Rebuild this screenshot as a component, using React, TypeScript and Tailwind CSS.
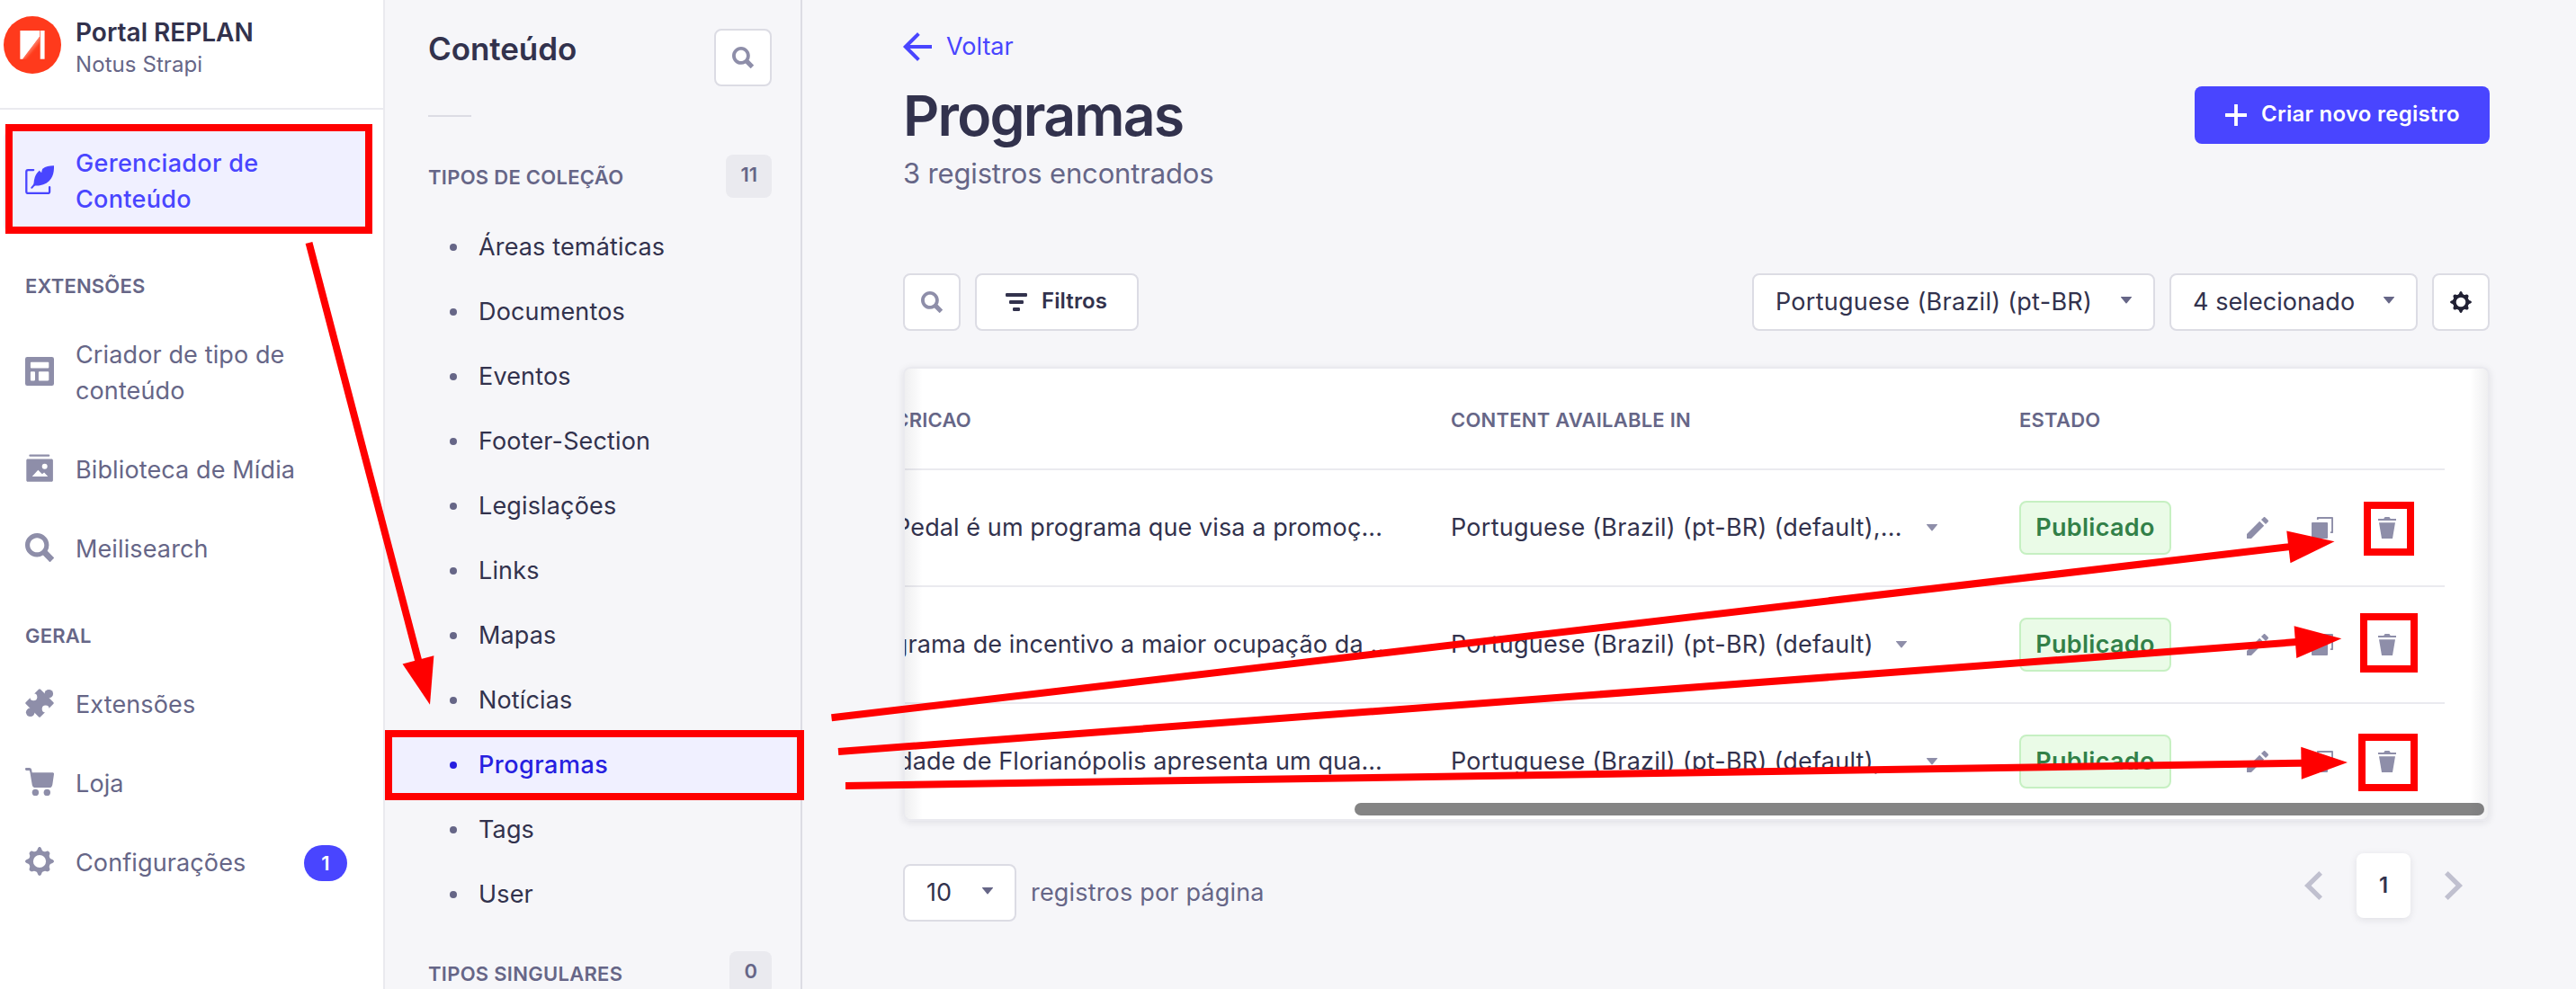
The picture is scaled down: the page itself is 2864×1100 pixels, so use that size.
import React from "react";
import type { ReactNode } from "react";

/* ---------- icons ---------- */

const SearchIcon = ({ className }: { className: string }) => (
  <svg viewBox="0 0 24 24" fill="currentColor" className={className}>
    <path
      fillRule="evenodd"
      d="m23.813 20.163-5.3-5.367a9.792 9.792 0 0 0 1.312-4.867C19.825 4.455 15.375 0 9.913 0 4.45 0 0 4.455 0 9.929c0 5.473 4.45 9.928 9.912 9.928a9.757 9.757 0 0 0 5.007-1.4l5.275 5.35a.634.634 0 0 0 .913 0l2.706-2.737a.641.641 0 0 0 0-.907ZM9.91 3.867c3.338 0 6.05 2.718 6.05 6.061s-2.712 6.061-6.05 6.061c-3.337 0-6.05-2.718-6.05-6.06 0-3.344 2.713-6.062 6.05-6.062Z"
    />
  </svg>
);

const FeatherIcon = () => (
  <svg viewBox="0 0 32 32" className="size-8">
    <path
      d="M9.2 5.1H3.1a1.8 1.8 0 0 0-1.8 1.8v22.3a1.8 1.8 0 0 0 1.8 1.8h22.2a1.8 1.8 0 0 0 1.8-1.8v-5"
      fill="none"
      stroke="currentColor"
      strokeWidth="2.3"
      strokeLinecap="round"
    />
    <path
      d="M32 .3c.2 5.500-.6 10.600-3.300 14.500-2.600 4.200-7 6.800-12.500 7.500-1.700.3-3.600.2-5 .3-1.200.6-2.200 2-3.200 3-.8.700-2.300-.4-1.500-1.400 1.100-1.300 2.500-2.500 3-4.200.1-2.500.6-4.700 1.300-7 .9-2.800 2.700-5.600 5.200-7.600.5 1 1.200 2 2.200 2.600.1-1.600.5-3.200 1.100-4.300C22.900 1.200 27.400.2 32 .3Z"
      fill="currentColor"
    />
  </svg>
);

const LayoutIcon = () => (
  <svg viewBox="0 0 32 32" className="size-8">
    <path
      fillRule="evenodd"
      fill="currentColor"
      d="M2.300 0h27.400A2.300 2.300 0 0 1 32 2.300v27.400a2.300 2.300 0 0 1-2.300 2.300H2.300A2.300 2.300 0 0 1 0 29.700V2.300A2.300 2.300 0 0 1 2.300 0ZM6.800 5.700a.9.900 0 0 0-.9.900v5a.9.900 0 0 0 .9.900h18.600a.9.900 0 0 0 .9-.9v-5a.9.900 0 0 0-.9-.9H6.800Zm0 10.600a.9.900 0 0 0-.9.900v8.400c0 .5.400.9.900.9h3.300c.5 0 .9-.4.900-.9v-8.400a.9.900 0 0 0-.9-.9H6.800Zm9 0a.9.900 0 0 0-.9.900v8.400c0 .5.400.9.900.9h9.600c.5 0 .9-.4.900-.9v-8.400a.9.900 0 0 0-.9-.9h-9.600Z"
    />
  </svg>
);

const MediaIcon = () => (
  <svg viewBox="0 0 32 32" className="size-8">
    <rect x="4.300" y="0.600" width="23" height="2.200" rx="1.100" fill="currentColor" />
    <path
      fillRule="evenodd"
      fill="currentColor"
      d="M2.800 5.600h26.600c.8 0 1.500.7 1.500 1.500v22.200c0 .8-.7 1.500-1.500 1.500H2.800c-.8 0-1.500-.7-1.500-1.500V7.100c0-.8.700-1.500 1.500-1.500Zm18.900 5.100a3 3 0 1 0 0 6 3 3 0 0 0 0-6ZM7.700 24.900h17.600l-4.200-4.400-2.200 1.800-4.600-4.500-6.600 7.100Z"
    />
  </svg>
);

const PuzzleIcon = () => (
  <svg viewBox="0 0 32 32" className="size-8">
    <mask id="puzzle">
      <rect width="32" height="32" fill="#fff" />
      <circle cx="9.300" cy="9.200" r="4" fill="#000" />
      <circle cx="22.700" cy="22.600" r="4" fill="#000" />
      <path d="m3 3 6 .5 1.500 4.500-2 1.500-4.500-1.500ZM29 29l-6-.5-1.500-4.500 2-1.500 4.500 1.500Z" fill="#000" />
    </mask>
    <g mask="url(#puzzle)" fill="currentColor">
      <path
        d="M16 1.800 30.200 16 16 30.200 1.800 16Z"
        stroke="currentColor"
        strokeWidth="3"
        strokeLinejoin="round"
      />
      <circle cx="26.300" cy="5.700" r="4.800" />
      <circle cx="5.700" cy="26.300" r="4.800" />
    </g>
  </svg>
);

const CartIcon = () => (
  <svg viewBox="0 0 32 32" className="size-8" fill="currentColor">
    <path d="M0 1.500C0 .6.600.1 1.300.1h3.300c1.200 0 2.200.7 2.500 1.900l.6 3.200h22.800c.9 0 1.600.8 1.500 1.700l-1.700 11.800c-.3 2-1.400 3.400-3.500 3.400H11.500c-2.100 0-3.500-1.300-3.800-3.400L5.400 5 4.800 2.900H1.300C.6 2.900 0 2.300 0 1.500Z" />
    <circle cx="11.400" cy="27.400" r="3.700" />
    <circle cx="24.300" cy="27.400" r="3.700" />
  </svg>
);

const CogIcon = ({ className, hole }: { className: string; hole: string }) => (
  <svg viewBox="0 0 32 32" className={className} fill="currentColor">
    {[0, 90, 180, 270].map((a) => (
      <path
        key={a}
        transform={`rotate(${a} 16 16)`}
        d="M11 5.500c2.100-.5 2.300-2.200 3-3.800C14.500.6 15.200 0 16 0s1.500.6 2 1.700c.7 1.600.9 3.300 3 3.800Z"
      />
    ))}
    {[45, 135, 225, 315].map((a) => (
      <path
        key={a}
        transform={`rotate(${a} 16 16)`}
        d="M11 6c1.600-.8 1.900-2.300 2.600-3.600.6-1 1.400-1.400 2.400-1.400s1.800.4 2.400 1.400c.7 1.300 1 2.800 2.600 3.600Z"
      />
    ))}
    <circle cx="16" cy="16" r="12" />
    <circle cx="16" cy="16" r="7.100" fill={hole} />
  </svg>
);

const Caret = ({ className }: { className: string }) => (
  <svg viewBox="0 0 12 8" className={className} fill="currentColor">
    <path d="M.4 0h11.200c.4 0 .5.400.3.700L6.500 7.200a.7.700 0 0 1-1 0L.1.700C-.1.400 0 0 .4 0Z" />
  </svg>
);

const PencilIcon = () => (
  <svg viewBox="0 0 24 24" className="size-6" fill="currentColor">
    <path d="m23.604 3.514c.528.528.528 1.360 0 1.887l-2.622 2.607-4.990-4.990L18.600.396a1.322 1.322 0 0 1 1.887 0l3.118 3.118ZM0 24v-4.990l14.200-14.200 4.990 4.990L4.990 24H0Z" />
  </svg>
);

const DuplicateIcon = () => (
  <svg viewBox="0 0 24 24" className="size-6" fill="currentColor">
    <path d="M6.800 0h16.300c.5 0 .9.400.9.900v16.300c0 .5-.4.900-.9.900h-2.200v-1.900h1.200V1.900H7.700v1.200H5.900V.9c0-.5.400-.9.900-.9Z" />
    <rect y="6" width="18" height="18" rx="0.900" />
  </svg>
);

const TrashIcon = () => (
  <svg viewBox="0 0 24 24" className="size-6" fill="currentColor">
    <path d="M3.236 6.149a.2.200 0 0 0-.197.233L6 24h12l2.960-17.618a.2.200 0 0 0-.196-.233H3.236ZM21.800 1.983c.11 0 .2.090.2.200v1.584a.2.200 0 0 1-.2.200H2.200a.2.200 0 0 1-.2-.2V2.183c0-.11.090-.2.200-.2h5.511c.9 0 1.631-1.090 1.631-1.983h5.316c0 .894.730 1.983 1.631 1.983H21.800Z" />
  </svg>
);

const FilterIcon = () => (
  <svg viewBox="0 0 24 24" className="size-6" fill="currentColor">
    <rect y="2" width="24" height="4" rx="1.200" />
    <rect x="4" y="10" width="16" height="4" rx="1.200" />
    <rect x="8" y="18" width="8" height="4" rx="1.200" />
  </svg>
);

const BackIcon = () => (
  <svg viewBox="0 0 24 24" className="size-8" fill="currentColor">
    <path d="M24 13.300a.2.200 0 0 1-.2.200H5.740l8.239 8.239a.2.200 0 0 1 0 .282L12.140 23.860a.2.200 0 0 1-.282 0L.14 12.140a.2.200 0 0 1 0-.282L11.860.14a.2.200 0 0 1 .282 0L13.980 1.980a.2.200 0 0 1 0 .282L5.740 10.500H23.800c.11 0 .2.090.2.200v2.600Z" />
  </svg>
);

const PlusIcon = () => (
  <svg viewBox="0 0 24 24" className="size-6" fill="currentColor">
    <path d="M24 13.604a.3.300 0 0 1-.3.300h-9.795V23.700a.3.300 0 0 1-.3.300h-3.210a.3.300 0 0 1-.3-.3v-9.795H.3a.3.300 0 0 1-.3-.3v-3.210a.3.300 0 0 1 .3-.3h9.795V.3a.3.300 0 0 1 .3-.3h3.210a.3.300 0 0 1 .3.300v9.795H23.700a.3.300 0 0 1 .3.300v3.210Z" />
  </svg>
);

const Chevron = ({ className }: { className: string }) => (
  <svg viewBox="0 0 20 32" className={className} fill="currentColor">
    <path d="M16.300 0 20 3.700 7.600 16 20 28.300 16.300 32 0 16Z" />
  </svg>
);

const Logo = () => (
  <svg viewBox="0 0 64 64" className="size-16 shrink-0">
    <defs>
      <linearGradient id="fold" gradientUnits="userSpaceOnUse" x1="29" y1="30" x2="36" y2="36">
        <stop offset="0" stopColor="#ffb5a8" />
        <stop offset="1" stopColor="#ff3f1e" />
      </linearGradient>
    </defs>
    <circle cx="32" cy="32" r="32" fill="#ff3a1c" />
    <path d="M18.400 16H40.300v6.500L21.500 47.700h-3.100Z" fill="#fff" />
    <path d="M40.300 22.500v10L27.500 47.700h-6.500Z" fill="url(#fold)" />
    <path d="M41 16h4.600v31.700H41Z" fill="#fff" />
    <path d="M40.300 16h.8v31.700h-.8Z" fill="#ff8d78" />
  </svg>
);

/* ---------- left navigation ---------- */

type NavItem = { icon: ReactNode; label: string; badge?: string };

const extensions: NavItem[] = [
  { icon: <LayoutIcon />, label: "Criador de tipo de conteúdo" },
  { icon: <MediaIcon />, label: "Biblioteca de Mídia" },
  { icon: <SearchIcon className="size-8" />, label: "Meilisearch" },
];

const general: NavItem[] = [
  { icon: <PuzzleIcon />, label: "Extensões" },
  { icon: <CartIcon />, label: "Loja" },
  { icon: <CogIcon className="size-8" hole="#ffffff" />, label: "Configurações", badge: "1" },
];

const NavGroup = ({ title, items }: { title: string; items: NavItem[] }) => (
  <section className="mt-10">
    <h3 className="mb-[21px] pl-7 text-[22px] leading-10 font-semibold tracking-[0.2px] text-[#666687]">
      {title}
    </h3>
    <ul className="flex flex-col gap-4">
      {items.map((item) => (
        <li key={item.label} className="flex items-center py-4 pr-10 pl-7 text-[#8e8ea9]">
          <span className="-mt-1 shrink-0">{item.icon}</span>
          <span className="ml-6 w-[246px] text-[27px] leading-10 tracking-[0.12px] text-[#666687]">
            {item.label}
          </span>
          {item.badge && (
            <span className="ml-2 flex h-10 w-12 shrink-0 items-center justify-center rounded-[20px] bg-[#4945ff] text-[22px] font-semibold text-white">
              {item.badge}
            </span>
          )}
        </li>
      ))}
    </ul>
  </section>
);

const MainNav = () => (
  <nav className="h-full w-[428px] shrink-0 border-r-2 border-[#eaeaef] bg-white">
    <header className="flex h-[122px] border-b-2 border-[#eaeaef] pt-4 pl-1">
      <div className="mt-0.5">
        <Logo />
      </div>
      <div className="ml-4">
        <p className="text-[28px] leading-10 font-semibold text-[#32324d]">Portal REPLAN</p>
        <p className="text-[24px] leading-8 tracking-[0.08px] text-[#666687]">Notus Strapi</p>
      </div>
    </header>
    <div className="mt-6 ml-1 flex w-[406px] items-center rounded-lg bg-[#f0f0ff] py-4 pl-6 text-[#4945ff]">
      <span className="-mt-1">
        <FeatherIcon />
      </span>
      <span className="ml-6 w-[246px] text-[27px] leading-10 font-medium tracking-[0.32px]">
        Gerenciador de Conteúdo
      </span>
    </div>
    <NavGroup title="EXTENSÕES" items={extensions} />
    <NavGroup title="GERAL" items={general} />
  </nav>
);

/* ---------- content types navigation ---------- */

const types = [
  "Áreas temáticas",
  "Documentos",
  "Eventos",
  "Footer-Section",
  "Legislações",
  "Links",
  "Mapas",
  "Notícias",
  "Programas",
  "Tags",
  "User",
];

const TypeHeading = ({ title, count }: { title: string; count: string }) => (
  <div className="flex h-12 items-center justify-between pr-8 pl-12 text-[22px] font-semibold text-[#666687]">
    <h3 className="pt-[3px] tracking-[0.28px]">{title}</h3>
    <span className="flex h-12 items-center rounded-lg bg-[#eaeaef] px-4 pb-[3px]">{count}</span>
  </div>
);

const ContentNav = () => (
  <nav className="h-full w-[464px] shrink-0 overflow-hidden border-r-2 border-[#dcdce4]">
    <div className="flex items-start justify-between pt-8 pr-8 pl-12">
      <h2 className="text-[35px] leading-[44px] font-semibold tracking-[-0.07px] text-[#32324d]">
        Conteúdo
      </h2>
      <div className="flex size-16 items-center justify-center rounded-lg border-2 border-[#dcdce4] bg-white text-[#8e8ea9]">
        <SearchIcon className="size-6" />
      </div>
    </div>
    <div className="mt-8 mb-[42px] ml-12 h-0.5 w-12 bg-[#dcdce4]" />
    <TypeHeading title="TIPOS DE COLEÇÃO" count="11" />
    <ul className="mt-[19px] mb-[27px]">
      {types.map((t) =>
        t === "Programas" ? (
          <li
            key={t}
            className="flex h-[72px] items-center bg-[#f0f0ff] pl-[72px] text-[27px] font-medium tracking-[0.5px] text-[#271fe0]"
          >
            <span className="mr-6 size-2 rounded-full bg-[#271fe0]" />
            {t}
          </li>
        ) : (
          <li
            key={t}
            className="flex h-[72px] items-center pl-[72px] text-[27px] tracking-[0.15px] text-[#32324d]"
          >
            <span className="mr-6 size-2 rounded-full bg-[#666687]" />
            {t}
          </li>
        ),
      )}
    </ul>
    <TypeHeading title="TIPOS SINGULARES" count="0" />
  </nav>
);

/* ---------- list view ---------- */

const SelectBox = ({ label, className }: { label: string; className: string }) => (
  <div
    className={`flex h-16 items-center justify-between rounded-lg border-2 border-[#dcdce4] bg-white pr-6 pl-6 text-[27px] text-[#32324d] ${className}`}
  >
    <span>{label}</span>
    <Caret className="-mt-1 h-2 w-3 text-[#666687]" />
  </div>
);

const rows = [
  {
    text: "Pedal é um programa que visa a promoç...",
    pad: "pr-[76px]",
    locale: "Portuguese (Brazil) (pt-BR) (default),...",
    gap: "ml-[26px]",
  },
  {
    text: "Programa de incentivo a maior ocupação da ...",
    pad: "pr-[66px]",
    locale: "Portuguese (Brazil) (pt-BR) (default)",
    gap: "ml-[24px]",
  },
  {
    text: "A cidade de Florianópolis apresenta um qua...",
    pad: "pr-[76px]",
    locale: "Portuguese (Brazil) (pt-BR) (default),...",
    gap: "ml-[26px]",
  },
];

const Table = () => (
  <div className="relative mt-10 h-[505px] overflow-hidden rounded-lg border-2 border-[#eaeaef] bg-white">
    <div className="mr-12">
      <div className="flex h-[113px] items-center border-b-2 border-[#eaeaef] pt-1 text-[22px] font-semibold tracking-[0.23px] text-[#666687]">
        <div className="flex w-[607px] shrink-0">
          <span className="flex w-[74px] justify-end whitespace-nowrap">DESCRICAO</span>
        </div>
        <span className="w-[632px] shrink-0">CONTENT AVAILABLE IN</span>
        <span>ESTADO</span>
      </div>
      {rows.map((row, i) => (
        <div
          key={i}
          className="flex h-[130px] items-center border-b-2 border-[#eaeaef] text-[27px] whitespace-nowrap text-[#32324d] last:border-transparent"
        >
          <div className={`flex w-[607px] shrink-0 justify-end tracking-[0.09px] ${row.pad}`}>
            <span>{row.text}</span>
          </div>
          <div className="flex w-[632px] shrink-0 items-center tracking-[0.25px]">
            {row.locale}
            <Caret className={`h-2 w-3.5 text-[#8e8ea9] ${row.gap}`} />
          </div>
          <div className="flex h-[60px] w-[169px] items-center justify-center rounded-lg border-2 border-[#c6f0c2] bg-[#eafbe7] font-semibold tracking-[0.29px] text-[#328048]">
            Publicado
          </div>
          <div className="ml-[84px] flex gap-12 text-[#8e8ea9]">
            <PencilIcon />
            <DuplicateIcon />
            <TrashIcon />
          </div>
        </div>
      ))}
    </div>
    <div className="absolute right-1 bottom-1 h-3.5 w-[1256px] rounded-full bg-[#848484]" />
    <div className="absolute inset-y-0 left-0 w-5 bg-linear-to-r from-[#21213412] to-transparent" />
    <div className="absolute inset-y-0 right-0 w-5 bg-linear-to-l from-[#21213412] to-transparent" />
  </div>
);

const ListView = () => (
  <main className="min-w-0 flex-1 pt-8 pr-24 pl-28">
    <div className="flex h-10 items-center gap-4 text-[27px] text-[#4945ff]">
      <BackIcon />
      <span>Voltar</span>
    </div>
    <div className="mt-6 flex h-16 items-center justify-between">
      <h1 className="text-[62.5px] leading-[66px] font-semibold tracking-[-1.8px] text-[#32324d]">
        Programas
      </h1>
      <div className="flex h-16 w-[328px] items-center gap-4 rounded-lg bg-[#4945ff] pl-[34px] text-[24px] font-semibold tracking-[0.25px] whitespace-nowrap text-white">
        <PlusIcon />
        <span className="-mt-0.5">Criar novo registro</span>
      </div>
    </div>
    <p className="mt-[9px] text-[31px] leading-[48px] tracking-[-0.16px] text-[#666687]">
      3 registros encontrados
    </p>
    <div className="mt-[87px] flex h-16 gap-4">
      <div className="flex size-16 items-center justify-center rounded-lg border-2 border-[#dcdce4] bg-white text-[#8e8ea9]">
        <SearchIcon className="size-6" />
      </div>
      <div className="flex w-[182px] items-center gap-4 rounded-lg border-2 border-[#dcdce4] bg-white pl-8 text-[24px] font-semibold tracking-[0.1px] text-[#32324d]">
        <FilterIcon />
        <span className="-mt-0.5">Filtros</span>
      </div>
      <div className="flex-1" />
      <SelectBox label="Portuguese (Brazil) (pt-BR)" className="w-[448px] tracking-[0.27px]" />
      <SelectBox label="4 selecionado" className="w-[276px] tracking-[0.07px]" />
      <div className="flex size-16 items-center justify-center rounded-lg border-2 border-[#dcdce4] bg-white text-[#212134]">
        <CogIcon className="size-6" hole="#ffffff" />
      </div>
    </div>
    <div className="rounded-lg shadow-[0_2px_8px_rgba(33,33,52,0.1)]">
      <Table />
    </div>
    <div className="mt-12 flex h-16 items-center">
      <SelectBox label="10" className="w-[126px]" />
      <span className="ml-4 text-[27px] tracking-[0.18px] text-[#666687]">
        registros por página
      </span>
      <div className="-mt-4 mr-[30px] ml-auto flex items-center text-[#c0c0cf]">
        <Chevron className="h-8 w-5" />
        <div className="mx-[38px] flex h-[72px] w-[60px] items-center justify-center rounded-lg bg-white text-[24px] font-semibold text-[#32324d] shadow-[0_2px_8px_rgba(33,33,52,0.1)]">
          1
        </div>
        <Chevron className="h-8 w-5 rotate-180" />
      </div>
    </div>
  </main>
);

/* ---------- tutorial markers drawn over the page ---------- */

const boxes = [
  { x: 6, y: 138, w: 408, h: 122 },
  { x: 428, y: 812, w: 466, h: 78 },
  { x: 2628, y: 558, w: 56, h: 60 },
  { x: 2624, y: 682, w: 64, h: 66 },
  { x: 2622, y: 816, w: 66, h: 64 },
];

const arrows = [
  { x1: 343.5, y1: 270, x2: 478, y2: 783.7 },
  { x1: 924.5, y1: 798.3, x2: 2595.5, y2: 602.3 },
  { x1: 932, y1: 836, x2: 2603.3, y2: 710.3 },
  { x1: 940, y1: 874, x2: 2610, y2: 848 },
];

const Markers = () => (
  <svg viewBox="0 0 2864 1100" className="absolute inset-0 h-[1100px] w-[2864px]">
    {boxes.map((b, i) => (
      <rect
        key={i}
        x={b.x + 4}
        y={b.y + 4}
        width={b.w - 8}
        height={b.h - 8}
        fill="none"
        stroke="#ff0000"
        strokeWidth="8"
      />
    ))}
    {arrows.map((a, i) => {
      const length = Math.hypot(a.x2 - a.x1, a.y2 - a.y1);
      const angle = (Math.atan2(a.y2 - a.y1, a.x2 - a.x1) * 180) / Math.PI;
      return (
        <g key={i} transform={`translate(${a.x1} ${a.y1}) rotate(${angle})`} fill="#ff0000">
          <rect y="-4" width={length - 50} height="8" />
          <path d={`M${length} 0 ${length - 51.5} 18V-18Z`} />
        </g>
      );
    })}
  </svg>
);

export default function App() {
  return (
    <div
      className="relative flex h-[1100px] w-[2864px] overflow-hidden bg-[#f6f6f9] font-[Inter,'Liberation_Sans',sans-serif] antialiased"
    >
      <MainNav />
      <ContentNav />
      <ListView />
      <Markers />
    </div>
  );
}
